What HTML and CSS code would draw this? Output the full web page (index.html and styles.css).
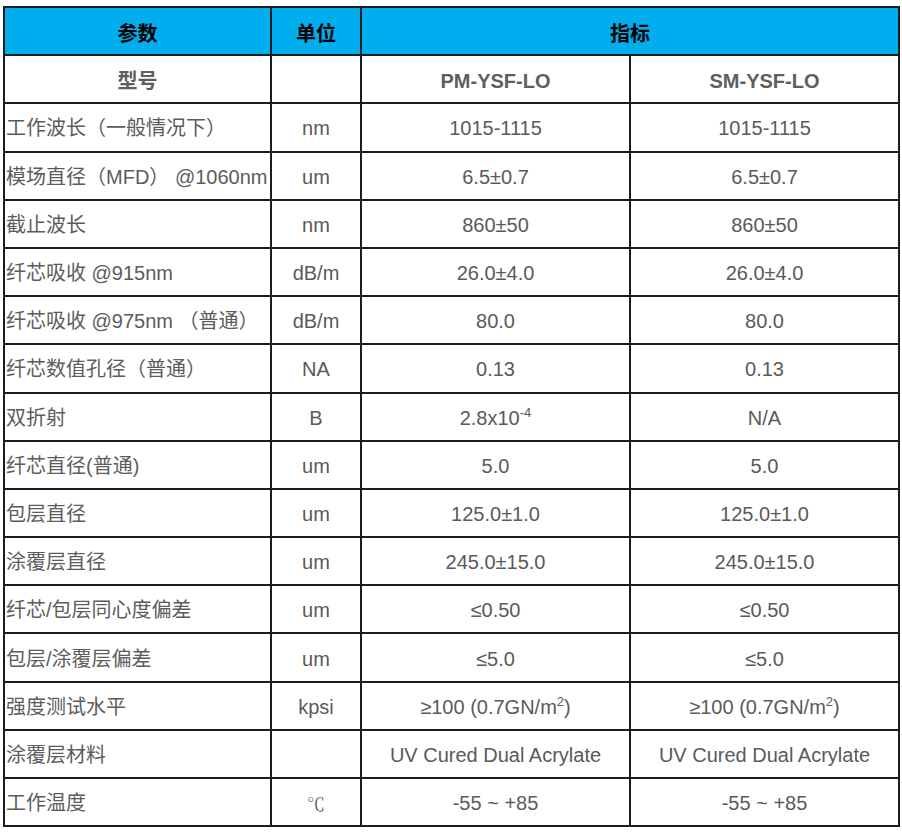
FILE: index.html
```html
<!DOCTYPE html>
<html lang="zh">
<head>
<meta charset="utf-8">
<title>参数表</title>
<link rel="stylesheet" href="styles.css">
</head>
<body>
<table class="spec">
  <colgroup>
    <col class="c-param">
    <col class="c-unit">
    <col class="c-val">
    <col class="c-val">
  </colgroup>
  <thead>
    <tr class="head">
      <th>参数</th>
      <th>单位</th>
      <th colspan="2">指标</th>
    </tr>
  </thead>
  <tbody>
    <tr class="model">
      <td class="center">型号</td>
      <td></td>
      <td>PM-YSF-LO</td>
      <td>SM-YSF-LO</td>
    </tr>
    <tr><td class="name">工作波长（一般情况下）</td><td>nm</td><td>1015-1115</td><td>1015-1115</td></tr>
    <tr><td class="name">模场直径（MFD） @1060nm</td><td>um</td><td>6.5±0.7</td><td>6.5±0.7</td></tr>
    <tr><td class="name">截止波长</td><td>nm</td><td>860±50</td><td>860±50</td></tr>
    <tr><td class="name">纤芯吸收 @915nm</td><td>dB/m</td><td>26.0±4.0</td><td>26.0±4.0</td></tr>
    <tr><td class="name">纤芯吸收 @975nm （普通）</td><td>dB/m</td><td>80.0</td><td>80.0</td></tr>
    <tr><td class="name">纤芯数值孔径（普通）</td><td>NA</td><td>0.13</td><td>0.13</td></tr>
    <tr><td class="name">双折射</td><td>B</td><td>2.8x10<sup>-4</sup></td><td>N/A</td></tr>
    <tr><td class="name">纤芯直径(普通)</td><td>um</td><td>5.0</td><td>5.0</td></tr>
    <tr><td class="name">包层直径</td><td>um</td><td>125.0±1.0</td><td>125.0±1.0</td></tr>
    <tr><td class="name">涂覆层直径</td><td>um</td><td>245.0±15.0</td><td>245.0±15.0</td></tr>
    <tr><td class="name">纤芯/包层同心度偏差</td><td>um</td><td>≤0.50</td><td>≤0.50</td></tr>
    <tr><td class="name">包层/涂覆层偏差</td><td>um</td><td>≤5.0</td><td>≤5.0</td></tr>
    <tr><td class="name">强度测试水平</td><td>kpsi</td><td>≥100 (0.7GN/m<sup>2</sup>)</td><td>≥100 (0.7GN/m<sup>2</sup>)</td></tr>
    <tr><td class="name">涂覆层材料</td><td></td><td>UV Cured Dual Acrylate</td><td>UV Cured Dual Acrylate</td></tr>
    <tr><td class="name">工作温度</td><td class="deg">℃</td><td>-55 ~ +85</td><td>-55 ~ +85</td></tr>
  </tbody>
</table>
</body>
</html>
```

FILE: styles.css
```css
html, body {
  margin: 0;
  padding: 0;
  background: #ffffff;
}

body {
  padding: 6px 0 0 3px;
  font-family: "Liberation Sans", Arial, "Noto Sans CJK SC", sans-serif;
}

.spec {
  border-collapse: collapse;
  table-layout: fixed;
  width: 896px;
  color: #5a5a5a;
  font-size: 20px;
}

.c-param { width: 267px; }
.c-unit { width: 90px; }
.c-val { width: 269px; }

.spec th,
.spec td {
  border: 2px solid #1c1c1c;
  height: 48.2px;
  padding: 2px 0 0 0;
  text-align: center;
  vertical-align: middle;
  line-height: 22px;
  white-space: nowrap;
  box-sizing: border-box;
}

.spec .head th {
  background: #00adef;
  color: #000000;
  font-weight: bold;
  font-size: 20px;
  padding-top: 5px;
}

.spec .model td {
  font-weight: bold;
  color: #5e5e5e;
  padding-top: 3px;
}

.spec td.name {
  text-align: left;
  padding-left: 1px;
  color: #5c5c5c;
}

.spec td.deg {
  font-family: "Noto Serif CJK SC", "Liberation Serif", serif;
  font-size: 18px;
}

.spec sup {
  font-size: 13px;
  line-height: 0;
  vertical-align: 8px;
}
```
